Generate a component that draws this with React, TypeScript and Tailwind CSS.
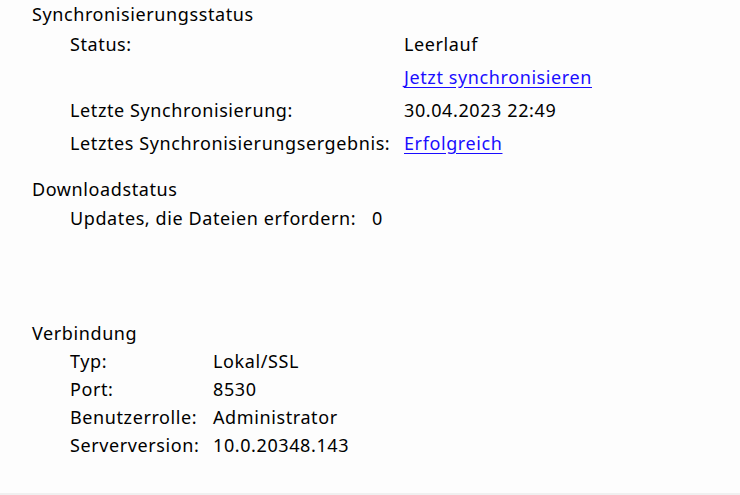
export default function App() {
  const font = { fontFamily: '"Noto Sans", "Open Sans", sans-serif' };
  return (
    <div
      className="w-[740px] h-[495px] bg-[#fdfdfd] flex flex-col text-[18px] tracking-[0.6px] text-black overflow-hidden"
      style={font}
    >
      <div className="flex-1 pl-[32px] pt-[2px]">
        <div className="h-[30px] leading-[24px]">Synchronisierungsstatus</div>
        <div className="grid grid-cols-[334px_1fr] auto-rows-[33px] leading-[24px] pl-[38px]">
          <div>Status:</div>
          <div>Leerlauf</div>
          <div></div>
          <div>
            <span className="text-[#1a0dff] underline underline-offset-[3px] cursor-pointer">Jetzt synchronisieren</span>
          </div>
          <div>Letzte Synchronisierung:</div>
          <div>30.04.2023 22:49</div>
          <div>Letztes Synchronisierungsergebnis:</div>
          <div>
            <span className="text-[#1a0dff] underline underline-offset-[3px] cursor-pointer">Erfolgreich</span>
          </div>
        </div>

        <div className="mt-[13px] h-[29px] leading-[24px]">Downloadstatus</div>
        <div className="grid grid-cols-[302px_1fr] auto-rows-[28px] leading-[24px] pl-[38px]">
          <div>Updates, die Dateien erfordern:</div>
          <div>0</div>
        </div>

        <div className="mt-[87px] h-[28px] leading-[24px]">Verbindung</div>
        <div className="grid grid-cols-[143px_1fr] auto-rows-[28px] leading-[24px] pl-[38px]">
          <div>Typ:</div>
          <div>Lokal/SSL</div>
          <div>Port:</div>
          <div>8530</div>
          <div>Benutzerrolle:</div>
          <div>Administrator</div>
          <div>Serverversion:</div>
          <div>10.0.20348.143</div>
        </div>
      </div>
      <div className="h-[2px] bg-[#f0f0f0]" />
    </div>
  );
}
